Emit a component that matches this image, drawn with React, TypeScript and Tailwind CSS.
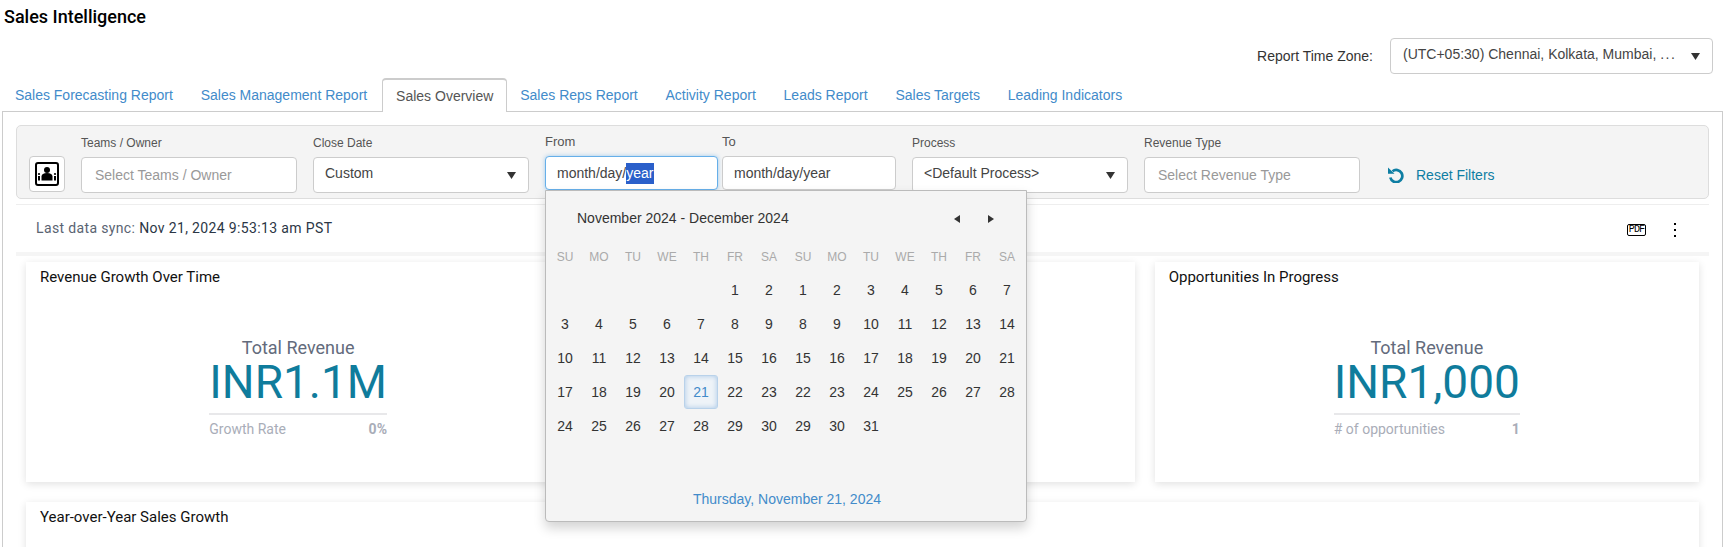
const tabs = [
  "Sales Forecasting Report",
  "Sales Management Report",
  "Sales Overview",
  "Sales Reps Report",
  "Activity Report",
  "Leads Report",
  "Sales Targets",
  "Leading Indicators",
];

const weekdays = ["SU", "MO", "TU", "WE", "TH", "FR", "SA", "SU", "MO", "TU", "WE", "TH", "FR", "SA"];

const dayRows: (number | null)[][] = [
  [null, null, null, null, null, 1, 2, 1, 2, 3, 4, 5, 6, 7],
  [3, 4, 5, 6, 7, 8, 9, 8, 9, 10, 11, 12, 13, 14],
  [10, 11, 12, 13, 14, 15, 16, 15, 16, 17, 18, 19, 20, 21],
  [17, 18, 19, 20, 21, 22, 23, 22, 23, 24, 25, 26, 27, 28],
  [24, 25, 26, 27, 28, 29, 30, 29, 30, 31, null, null, null, null],
  [null, null, null, null, null, null, null, null, null, null, null, null, null, null],
];

const Caret = () => (
  <svg width="9" height="7" viewBox="0 0 9 7" className="shrink-0">
    <polygon points="0,0 9,0 4.5,7" fill="#333" />
  </svg>
);

const TeamIcon = () => (
  <svg width="24" height="24" viewBox="0 0 24 24">
    <rect x="1" y="1" width="22" height="22" rx="2" fill="#fff" stroke="#000" strokeWidth="2" />
    <circle cx="12" cy="8" r="3" fill="#000" />
    <path d="M6.500 18.500v-4c0-2 2-3.500 5.500-3.500s5.500 1.500 5.500 3.500v4z" fill="#000" />
    <circle cx="4" cy="12" r="1.100" fill="#000" />
    <circle cx="20" cy="12" r="1.100" fill="#000" />
    <rect x="3" y="14" width="2" height="4.500" fill="#000" />
    <rect x="19" y="14" width="2" height="4.500" fill="#000" />
  </svg>
);

const ResetIcon = () => (
  <svg width="16" height="16" viewBox="0 0 16 16" className="mr-[12px]" fill="none">
    <path d="M4.500 4.200A6.100 6.100 0 1 1 2.300 10.500" stroke="#0e7ea3" strokeWidth="2.700" />
    <polygon points="0,0.500 0,6.800 6.500,6.800" fill="#0e7ea3" />
  </svg>
);

const Label = ({ children }: { children: string }) => (
  <div className="text-[12px] leading-[14px] text-[#555] mb-[7px]">{children}</div>
);

const TextField = ({ label, placeholder, className }: { label: string; placeholder: string; className: string }) => (
  <div className={className}>
    <Label>{label}</Label>
    <div className="h-[36px] bg-white border border-[#ccc] rounded-[4px] flex items-center px-[13px] text-[14px] text-[#999]">
      {placeholder}
    </div>
  </div>
);

const SelectField = ({ label, value, className }: { label: string; value: string; className: string }) => (
  <div className={className}>
    <Label>{label}</Label>
    <div className="h-[36px] bg-white border border-[#ccc] rounded-[4px] flex items-center justify-between pl-[11px] pr-[12px] text-[14px] text-[#444]">
      <span className="-mt-[3px]">{value}</span>
      <Caret />
    </div>
  </div>
);

const Metric = ({ value, rowLabel, rowValue }: { value: string; rowLabel: string; rowValue: string }) => (
  <div className="flex justify-center pt-[50px]">
    <div className="inline-flex flex-col items-stretch">
      <div className="text-center text-[18px] leading-[22px] text-[#636b7c]">Total Revenue</div>
      <div className="-mt-[2px] text-center text-[46px] leading-[50px] text-[#0f7c9c]">{value}</div>
      <div className="h-[2px] bg-[#e8e8ea] mt-[6px]" />
      <div className="flex justify-between text-[14px] leading-[18px] mt-[5px] text-[#a9adb8]">
        <span>{rowLabel}</span>
        <span className="font-bold">{rowValue}</span>
      </div>
    </div>
  </div>
);

const Card = ({ title, className, children }: { title: string; className: string; children?: React.ReactNode }) => (
  <div className={`bg-white shadow-[0_2px_8px_rgba(0,0,0,0.12)] font-['Roboto',sans-serif] ${className}`}>
    <div className="h-[25px] pl-[14px] pt-[6px] text-[15px] leading-[18px] text-[#111]">{title}</div>
    {children}
  </div>
);

export default function App() {
  return (
    <div className="relative w-[1733px] h-[547px] overflow-hidden bg-white font-['Liberation_Sans',sans-serif]">
      <div className="h-[32px] pl-[4px] flex items-center text-[18px] font-medium text-black font-['Roboto',sans-serif]">
        Sales Intelligence
      </div>

      <div className="mt-[6px] flex justify-end items-center pr-[20px] h-[36px]">
        <span className="text-[14px] text-[#333] mr-[17px] mt-[1px]">Report Time Zone:</span>
        <div className="w-[323px] h-[36px] bg-white border border-[#ccc] rounded-[4px] flex items-center justify-between pl-[12px] pr-[12px] text-[14px] text-[#444]">
          <span className="-mt-[3px]">
            (UTC+05:30) Chennai, Kolkata, Mumbai, <span className="tracking-[1.500px]">...</span>
          </span>
          <Caret />
        </div>
      </div>

      <div className="mt-[4px] pl-[1px] flex h-[33px]">
        {tabs.map((tab) =>
          tab === "Sales Overview" ? (
            <div
              key={tab}
              className="relative z-10 ml-[1px] -mr-[1px] h-[34px] px-[13px] flex items-center bg-white border border-[#ccc] border-t-2 border-b-0 rounded-t-[4px] text-[14px] text-[#555]"
            >
              {tab}
            </div>
          ) : (
            <div key={tab} className="h-[33px] px-[13.900px] flex items-center pt-[2px] text-[14px] text-[#428bca]">
              {tab}
            </div>
          ),
        )}
      </div>

      <div className="ml-[2px] w-[1721px] h-[500px] border border-[#ccc]">
        <div className="mx-[13px] mt-[13px] h-[74px] bg-[#f4f4f4] border border-[#ddd] rounded-[5px] flex pl-[12px]">
          <div className="mt-[30px] w-[36px] h-[36px] bg-white border border-[#ccc] rounded-[4px] flex items-center justify-center">
            <TeamIcon />
          </div>
          <TextField label="Teams / Owner" placeholder="Select Teams / Owner" className="ml-[16px] mt-[10px] w-[216px]" />
          <SelectField label="Close Date" value="Custom" className="ml-[16px] mt-[10px] w-[216px]" />

          <div className="ml-[16px] mt-[8px] w-[173px]">
            <div className="text-[13px] leading-[15px] text-[#555] mb-[7px]">From</div>
            <div className="h-[34px] bg-white border border-[#66afe9] rounded-[4px] shadow-[0_0_4px_rgba(102,175,233,0.6)] flex items-center pl-[11px] text-[14px] text-[#444]">
              month/day/<span className="bg-[#2a5fca] text-white">year</span>
            </div>
          </div>
          <div className="ml-[4px] mt-[8px] w-[174px]">
            <div className="text-[13px] leading-[15px] text-[#555] mb-[7px]">To</div>
            <div className="h-[34px] bg-white border border-[#ccc] rounded-[4px] flex items-center pl-[11px] text-[14px] text-[#444]">
              month/day/year
            </div>
          </div>

          <SelectField label="Process" value="<Default Process>" className="ml-[16px] mt-[10px] w-[216px]" />
          <TextField label="Revenue Type" placeholder="Select Revenue Type" className="ml-[16px] mt-[10px] w-[216px]" />

          <div className="ml-[28px] mt-[31px] h-[36px] flex items-center text-[14px] text-[#0e7ea3]">
            <ResetIcon />
            Reset Filters
          </div>
        </div>

        <div className="mx-[13px] mt-[5px] h-[48px] border-t border-[#eee] flex items-center justify-between pl-[20px] pr-[33px] text-[14px] tracking-[0.360px] font-['Roboto',sans-serif]">
          <div className="text-[#5a6472]">
            Last data sync: <span className="text-[#2b3645]">Nov 21, 2024 9:53:13 am PST</span>
          </div>
          <div className="flex items-center mt-[2px]">
            <span className="h-[12px] w-[19px] flex items-center justify-center border border-black rounded-[2px] text-[10px] tracking-[-0.800px] leading-none text-black font-['Liberation_Mono',monospace]">
              PDF
            </span>
            <div className="ml-[28px] flex flex-col gap-[4px]">
              <span className="w-[2px] h-[2px] bg-black" />
              <span className="w-[2px] h-[2px] bg-black" />
              <span className="w-[2px] h-[2px] bg-black" />
            </div>
          </div>
        </div>
        <div className="mx-[13px] h-[4px] bg-[#f5f5f5]" />

        <div className="mx-[23px] mt-[6px] grid grid-cols-3 gap-x-[20px] gap-y-[20px]">
          <Card title="Revenue Growth Over Time" className="h-[220px]">
            <Metric value="INR1.1M" rowLabel="Growth Rate" rowValue="0%" />
          </Card>
          <Card title="" className="h-[220px]" />
          <Card title="Opportunities In Progress" className="h-[220px]">
            <Metric value="INR1,000" rowLabel="# of opportunities" rowValue="1" />
          </Card>
          <Card title="Year-over-Year Sales Growth" className="col-span-3 h-[200px]" />
        </div>
      </div>

      <div className="absolute left-[545px] top-[190px] w-[482px] h-[332px] bg-[#f4f4f4] border border-[#bbb] rounded-b-[4px] shadow-[0_6px_12px_rgba(0,0,0,0.175)] pl-[2px]">
        <div className="h-[50px] flex items-center justify-between pl-[29px] pr-[32px] pt-[5px] text-[14px] text-[#333]">
          <span>November 2024 - December 2024</span>
          <div className="flex items-center gap-[28px]">
            <svg width="6" height="8" viewBox="0 0 6 8">
              <polygon points="6,0 6,8 0,4" fill="#333" />
            </svg>
            <svg width="6" height="8" viewBox="0 0 6 8">
              <polygon points="0,0 0,8 6,4" fill="#333" />
            </svg>
          </div>
        </div>
        <div className="grid grid-cols-[repeat(14,34px)] auto-rows-[34px] text-[14px] text-[#333]">
          {weekdays.map((d, i) => (
            <div key={i} className="h-[32px] flex items-center justify-center text-[12px] text-[#aaa]">
              {d}
            </div>
          ))}
          {dayRows.flat().map((d, i) =>
            i === 46 ? (
              <div
                key={i}
                className="-mt-[2px] h-[34px] flex items-center justify-center rounded-[3px] border border-[#b9d2ea] bg-[#eef3f8] shadow-[inset_0_0_5px_rgba(120,170,220,0.6)] text-[#428bca]"
              >
                {d}
              </div>
            ) : (
              <div key={i} className="-mt-[2px] h-[34px] flex items-center justify-center">
                {d}
              </div>
            ),
          )}
        </div>
        <div className="h-[40px] flex items-center justify-center text-[14px] text-[#428bca]">Thursday, November 21, 2024</div>
      </div>
    </div>
  );
}
